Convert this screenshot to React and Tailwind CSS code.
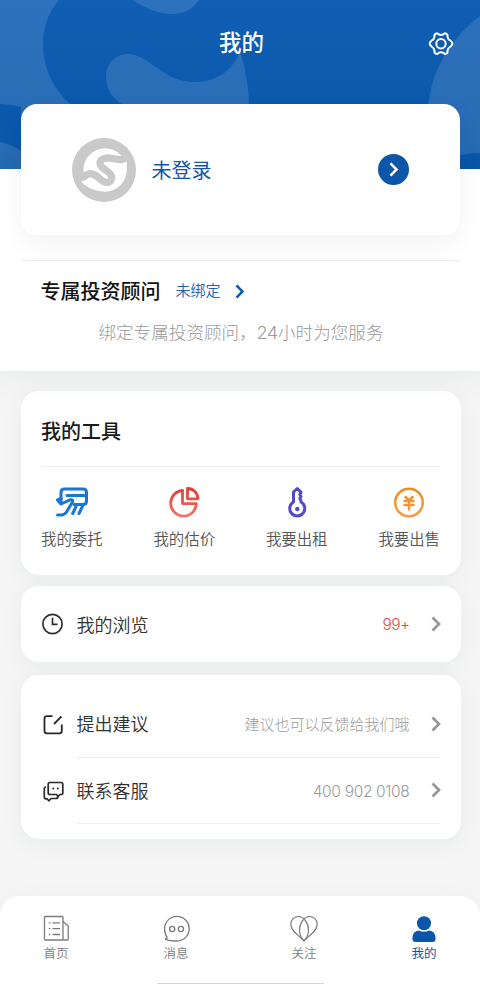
import React, { useState } from 'react';

const tools = [
  { label: '我的委托', icon: <EntrustIcon /> },
  { label: '我的估价', icon: <PieIcon /> },
  { label: '我要出租', icon: <KeyIcon /> },
  { label: '我要出售', icon: <YuanIcon /> },
];

const tabs = [
  { id: 'home', label: '首页', icon: <NewsIcon /> },
  { id: 'message', label: '消息', icon: <MessageIcon /> },
  { id: 'follow', label: '关注', icon: <HeartIcon /> },
  { id: 'mine', label: '我的', icon: <UserIcon /> },
];

function EntrustIcon() {
  return (
    <svg className="h-8 w-9" viewBox="0 0 36 32" fill="none" stroke="#1976d2" strokeWidth="3" strokeLinecap="round" strokeLinejoin="round">
      <path d="M7 13V6.500Q7 3 10.500 3H29Q32.500 3 32.500 6.500V15Q32.500 18.500 29 18.500H20" />
      <path d="M13 9.500H32" />
      <path d="M3.500 14L7 12.500V18L3.500 14M7 18L16.500 13.700Q19.500 13.500 18.500 16L12.500 26Q10.500 29 7 29H3.500" />
      <path d="M22 20.500L18.700 27.500M28.300 20.500L25 27.500" />
    </svg>
  );
}

function PieIcon() {
  return (
    <svg className="h-8 w-8" viewBox="0 0 32 32" fill="none" strokeWidth="2.800" strokeLinejoin="round" stroke="url(#pie)">
      <defs>
        <linearGradient id="pie" x1="0" y1="0" x2="0" y2="32" gradientUnits="userSpaceOnUse">
          <stop offset="0" stopColor="#e03a2c" />
          <stop offset="1" stopColor="#ef786c" />
        </linearGradient>
      </defs>
      <path d="M14.500 4.500A12.800 12.800 0 1 0 28.300 17.600H14.500Z" />
      <path d="M19.500 2.500A10.500 10.500 0 0 1 30 12.800H19.500Z" />
    </svg>
  );
}

function KeyIcon() {
  return (
    <svg className="h-8 w-8" viewBox="0 0 32 32" fill="none" stroke="#5549c8" strokeWidth="3" strokeLinejoin="round">
      <path d="M12.500 16V6L16.300 2.500L20 6L18.800 8.500L20 10.500L18.800 12.500L20 14.500V16A7.500 7.500 0 1 1 12.500 16Z" />
      <circle cx="16.300" cy="23" r="2.200" fill="#5549c8" stroke="none" />
    </svg>
  );
}

function YuanIcon() {
  return (
    <svg className="h-8 w-8" viewBox="0 0 32 32" fill="none" strokeWidth="2.500" strokeLinecap="round" stroke="url(#yuan)">
      <defs>
        <linearGradient id="yuan" x1="0" y1="0" x2="0" y2="32" gradientUnits="userSpaceOnUse">
          <stop offset="0" stopColor="#eb8c16" />
          <stop offset="1" stopColor="#f3a253" />
        </linearGradient>
      </defs>
      <circle cx="16" cy="16.500" r="13.800" />
      <path d="M12.500 11L16 14.500L19.500 11M11.500 15H20.500M11.500 19H20.500M16 15V23.500" />
    </svg>
  );
}

function ClockIcon() {
  return (
    <svg className="h-6 w-6" viewBox="0 0 24 24" fill="none" stroke="#2e2e2e" strokeWidth="1.700">
      <circle cx="11.500" cy="12" r="9.600" />
      <path d="M11.500 5.800V12.400H16.500" />
    </svg>
  );
}

function EditIcon() {
  return (
    <svg className="h-6 w-6" viewBox="0 0 24 24" fill="none" stroke="#292929" strokeWidth="1.800">
      <path d="M11.500 4.200H6Q3.500 4.200 3.500 6.500V19Q3.500 21.300 6 21.300H18.500Q20.800 21.300 20.800 19V12.500M13 12L20.500 4.300" />
    </svg>
  );
}

function ServiceIcon() {
  return (
    <svg className="h-6 w-6" viewBox="0 0 24 24" fill="none" stroke="#292929" strokeWidth="1.700" strokeLinejoin="round">
      <path d="M9 3.500H20Q21.800 3.500 21.800 5.300V13.700Q21.800 15.500 20 15.500H19L17 17.500L15.500 15.500H9Q7.200 15.500 7.200 13.700V5.300Q7.200 3.500 9 3.500Z" />
      <path d="M5 8Q3.300 8 3.300 9.800V18Q3.300 19.800 5 19.800H6L7.800 21.800L10 19.500H14.500Q17 19.500 17 17.500" />
      <circle cx="12.300" cy="9.500" r="1" fill="#292929" stroke="none" />
      <circle cx="16.800" cy="9.500" r="1" fill="#292929" stroke="none" />
    </svg>
  );
}

function Chevron({ className }) {
  return (
    <svg className={className} viewBox="0 0 10 16" fill="none" stroke="currentColor" strokeWidth="2.700">
      <path d="M1.500 1.500L8 8L1.500 14.500" />
    </svg>
  );
}

function GearIcon() {
  return (
    <svg className="h-7 w-7" viewBox="0 0 28 28" fill="none" stroke="white" strokeWidth="2" strokeLinejoin="round">
      <path d="M8.800 3.700Q10.200 2.900 11.300 4.100Q14 5.700 16.700 4.100Q17.800 2.900 19.200 3.700Q20.900 4.500 20.500 6.600Q20.800 9.200 23.500 10.700Q25.300 12 25.300 13.600Q25.300 15.200 23.500 16.500Q20.800 18.100 20.500 20.700Q20.900 22.900 19.200 23.700Q17.800 24.500 16.700 23.200Q14 21.500 11.300 23.200Q10.200 24.500 8.800 23.700Q7.100 22.900 7.500 20.700Q7.200 18.100 4.500 16.500Q2.700 15.200 2.700 13.600Q2.700 12 4.500 10.700Q7.200 9.200 7.500 6.600Q7.100 4.500 8.800 3.700Z" />
      <circle cx="14" cy="13.700" r="4.700" />
    </svg>
  );
}

function NewsIcon() {
  return (
    <svg className="h-7 w-7" viewBox="0 0 28 28" fill="none" stroke="currentColor" strokeWidth="1.300" strokeLinejoin="round">
      <rect x="2.500" y="2.500" width="18.500" height="23.500" rx="0.800" />
      <path d="M21 7.500L26.200 12V25Q26.200 26 25.200 26H21M10.500 8.800H18M10.500 14.600H18M10.500 20.500H18M6.800 8.800H8.300M6.800 14.600H8.300M6.800 20.500H8.300" />
    </svg>
  );
}

function MessageIcon() {
  return (
    <svg className="h-7 w-7" viewBox="0 0 28 28" fill="none" stroke="currentColor" strokeWidth="1.300" strokeLinejoin="round">
      <path d="M5 23.200Q2.300 19.500 2.600 14.500A12.300 12.300 0 1 1 15 27Q8.500 27.200 3.700 25.600Q3 25 3.900 24.500Q5.200 24.200 5.700 23.500" />
      <circle cx="10.200" cy="15" r="2.600" />
      <circle cx="18.900" cy="15" r="2.600" />
    </svg>
  );
}

function HeartIcon() {
  return (
    <svg className="h-7 w-7" viewBox="0 0 28 28" fill="none" stroke="currentColor" strokeWidth="1.200" strokeLinejoin="round">
      <path d="M14 26.700C9 22 0.800 17 0.800 10.200C0.800 5.500 4.300 2.500 8.600 2.500C13.500 2.500 18.500 9 18.500 16C18.500 21 16.500 24.500 14 26.700Z" />
      <path d="M14 26.700C19 22 27.200 17 27.200 10.200C27.200 5.500 23.700 2.500 19.400 2.500C14.500 2.500 9.500 9 9.500 16C9.500 21 11.500 24.500 14 26.700Z" />
    </svg>
  );
}

function UserIcon() {
  return (
    <svg className="h-7 w-7" viewBox="0 0 28 28" fill="currentColor">
      <circle cx="14" cy="9.200" r="7" />
      <path d="M9 16.500Q14 19 19 16.500Q25.600 17 25.600 24.500Q25.600 28 22.500 28H5.500Q2.400 28 2.400 24.500Q2.400 17 9 16.500Z" />
    </svg>
  );
}

function Avatar() {
  return (
    <svg className="h-16 w-16" viewBox="6 7 192 192" fill="none">
      <circle cx="102" cy="103" r="96" fill="#c9c9c9" />
      <circle cx="105" cy="103" r="65" fill="white" />
      <path d="M182 58C160 77 146 72 130 69C108 64 90 69 90 83C90 101 125 107 125 125C125 137 116 141 108 140C88 136 84 115 62 114C48 115 40 124 26 136" stroke="#c9c9c9" strokeWidth="22" />
      <path d="M33 138Q50 130 66 137Q84 149 100 154L92 167Q54 161 33 138ZM138 84Q158 88 170 77Q172 95 169 110L150 110Z" fill="white" />
    </svg>
  );
}

// Oversized brand mark behind the header
function HeaderPattern() {
  return (
    <svg className="absolute inset-0 h-full w-full" viewBox="0 0 480 169" fill="white" fillOpacity="0.12">
      <path d="M0 0H59C48 12 43 28 43 44C43 69 53 88 71 105V169H21V107Q10 104 0 104Z" />
      <path d="M0 142Q11 144 21 151V169H0Z" />
      <path d="M133 0C148 10 160 14 173 14C184 14 192 9 199 0Z" />
      <path d="M106 77C106 64 115 54 128 54C149 54 162 82 195 82C218 82 233 69 240 52Q249 77 249 110H135C117 104 106 93 106 77Z" />
      <path d="M480 16C450 39 430 72 428 110L450 158Q465 153 480 153Z" />
    </svg>
  );
}

function Row({ icon, label, children, bordered }) {
  return (
    <div className="flex items-center">
      <div className="w-9 shrink-0">{icon}</div>
      <div className={`flex flex-1 items-center justify-between ${bordered ? 'h-[66.500px] border-b border-[#efefef]' : 'h-[76px]'}`}>
        <span className="pt-0.5 text-[18px] text-[#303030]">{label}</span>
        <div className="flex items-center">
          {children}
          <Chevron className="ml-[21px] h-4 w-2.5 text-[#969696]" />
        </div>
      </div>
    </div>
  );
}

function App() {
  const [activeTab, setActiveTab] = useState('mine');

  return (
    <div className="flex h-[984px] w-[480px] flex-col overflow-hidden bg-[#f5f5f5] font-['Inter','Noto_Sans_CJK_SC',sans-serif] font-[350]">
      {/* Header */}
      <header className="relative h-[169px] shrink-0 bg-linear-to-b from-[#105fb4] to-[#0856a8]">
        <HeaderPattern />
        <div className="relative grid grid-cols-3 items-center pt-[27px] pr-[24.500px] pl-[25.500px]">
          <h1 className="col-start-2 pl-0.5 text-center text-[22.500px] leading-[28px] font-medium text-white">我的</h1>
          <button className="justify-self-end pt-[3px]">
            <GearIcon />
          </button>
        </div>
      </header>

      {/* Profile and consultant */}
      <section className="relative h-[202px] shrink-0 bg-white px-[20.500px] shadow-[0_8px_28px_rgba(40,60,70,0.06)]">
        <div className="-mt-[65px] flex h-[131px] items-center rounded-2xl bg-white pr-[51px] pl-[51px] shadow-[0_8px_24px_rgba(0,30,20,0.055)]">
          <Avatar />
          <span className="ml-4 flex-1 pt-0.5 text-[20px] font-normal text-[#1257a8]">未登录</span>
          <button className="flex h-[31px] w-[31px] items-center justify-center rounded-full bg-[#0b56a8] text-white">
            <Chevron className="ml-0.5 h-[15px] w-[9.500px]" />
          </button>
        </div>
        <div className="mt-[25px] border-t border-[#efefef] pt-4 pl-5">
          <div className="flex h-7 items-center">
            <h2 className="pt-px text-[20px] font-medium text-[#111]">专属投资顾问</h2>
            <span className="ml-[15px] pt-px text-[15px] text-[#1b61b0]">未绑定</span>
            <Chevron className="ml-3.5 h-[15px] w-[9.500px] text-[#1058aa]" />
          </div>
        </div>
        <p className="mt-4 pl-0.5 text-center text-[17.600px] leading-6 font-light text-[#999]">绑定专属投资顾问，<span className="tracking-[-0.2px]">24</span>小时为您服务</p>
      </section>

      {/* Cards */}
      <main className="pt-5 pr-[19.500px] pl-[20.500px]">
        <section className="h-[184px] rounded-[18px] bg-white px-[20.500px] pt-[26px] shadow-[0_5px_22px_rgba(40,60,70,0.06)]">
          <h2 className="h-[50px] border-b border-[#efefef] text-[20px] leading-[30px] font-medium text-[#191919]">我的工具</h2>
          <div className="mt-[19px] flex justify-between">
            {tools.map((tool) => (
              <div key={tool.label} className="flex flex-col items-center">
                {tool.icon}
                <span className="mt-2.5 text-[15.400px] leading-6 text-[#555]">{tool.label}</span>
              </div>
            ))}
          </div>
        </section>

        <section className="mt-[11px] rounded-[18px] bg-white px-5 shadow-[0_5px_22px_rgba(40,60,70,0.06)]">
          <Row icon={<ClockIcon />} label="我的浏览">
            <span className="pt-0.5 text-[15.500px] tracking-[-0.600px] text-[#dd4b3f]">99+</span>
          </Row>
        </section>

        <section className="mt-[13px] h-[164px] rounded-[18px] bg-white px-5 pt-4 shadow-[0_5px_22px_rgba(40,60,70,0.06)]">
          <Row icon={<EditIcon />} label="提出建议" bordered>
            <span className="pt-0.5 text-[15px] font-light text-[#999]">建议也可以反馈给我们哦</span>
          </Row>
          <Row icon={<ServiceIcon />} label="联系客服" bordered>
            <span className="pt-0.5 text-[15.500px] tracking-[-0.330px] font-light text-[#999]">400 902 0108</span>
          </Row>
        </section>
      </main>

      {/* Tab bar */}
      <nav className="mt-auto flex h-[88px] shrink-0 flex-col justify-between rounded-t-[20px] bg-white shadow-[0_-3px_20px_rgba(0,0,0,0.02)]">
        <div className="grid grid-cols-[120px_128px_120px_28px] pt-[18px] pl-[42px]">
          {tabs.map((tab) => (
            <button
              key={tab.id}
              onClick={() => setActiveTab(tab.id)}
              className={`flex w-7 flex-col items-center ${activeTab === tab.id ? 'font-normal text-[#0b56a8]' : 'text-[#7b7b7b]'}`}
            >
              {tab.icon}
              <span className="mt-0.5 text-[12.500px] leading-5 whitespace-nowrap">{tab.label}</span>
            </button>
          ))}
        </div>
        <div className="mx-auto h-px w-[167px] bg-[#d5d5d5]" />
      </nav>
    </div>
  );
}

export default App;
